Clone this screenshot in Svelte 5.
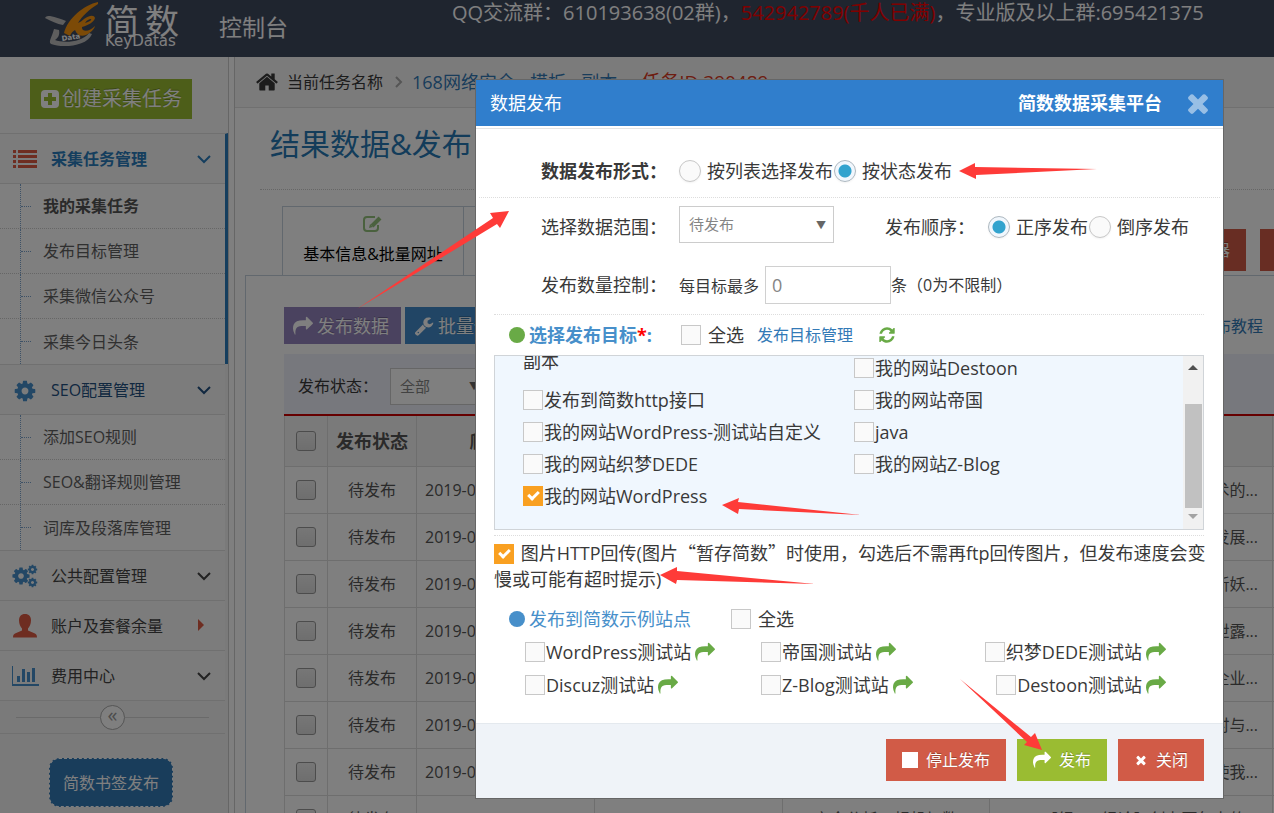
<script lang="ts">
  const paths = {
    share: 'M1792 640q0 26-19 45l-512 512q-19 19-45 19t-45-19-19-45v-256h-224q-98 0-175.500 6t-154 21.500-133 42.500-105.500 69.500-80 101-48.500 138.500-17.500 181q0 55 5 123 0 6 2.500 23.500t2.500 26.500q0 15-8.500 25t-23.500 10q-16 0-28-17-7-9-13-22t-13.500-30-10.500-24q-127-285-127-451 0-199 53-333 162-403 875-403h224v-256q0-26 19-45t45-19 45 19l512 512q19 19 19 45z',
    times: 'M1490 1322q0 40-28 68l-136 136q-28 28-68 28t-68-28l-294-294-294 294q-28 28-68 28t-68-28l-136-136q-28-28-28-68t28-68l294-294-294-294q-28-28-28-68t28-68l136-136q28-28 68-28t68 28l294 294 294-294q28-28 68-28t68 28l136 136q28 28 28 68t-28 68l-294 294 294 294q28 28 28 68z',
    home: 'M1472 992v480q0 26-19 45t-45 19h-384v-384h-256v384h-384q-26 0-45-19t-19-45v-480q0-1 .5-3t.5-3l575-474 575 474q1 2 1 6zm223-69l-62 74q-8 9-21 11h-3q-13 0-21-7l-692-577-692 577q-12 8-24 7-13-2-21-11l-62-74q-8-10-7-23.500t11-21.500l719-599q32-26 76-26t76 26l244 204v-195q0-14 9-23t23-9h192q14 0 23 9t9 23v408l219 182q10 8 11 21.500t-7 23.500z',
    cog: 'M1152 896q0-106-75-181t-181-75-181 75-75 181 75 181 181 75 181-75 75-181zm512-109v222q0 12-8 23t-20 13l-185 28q-19 54-39 91 35 50 107 138 10 12 10 25t-9 23q-27 37-99 108t-94 71q-12 0-26-9l-138-108q-44 23-91 38-16 136-29 186-7 28-36 28h-222q-14 0-24.500-8.500t-11.500-21.500l-28-184q-49-16-90-37l-141 107q-10 9-25 9-14 0-25-11-126-114-165-168-7-10-7-23 0-12 8-23 15-21 51-66.500t54-70.500q-27-50-41-99l-183-27q-13-2-21-12.500t-8-23.500v-222q0-12 8-23t19-13l186-28q14-46 39-92-40-57-107-138-10-12-10-24 0-10 9-23 26-36 98.500-107.500t94.500-71.500q13 0 26 10l138 107q44-23 91-38 16-136 29-186 7-28 36-28h222q14 0 24.500 8.500t11.500 21.500l28 184q49 16 90 37l142-107q9-9 24-9 13 0 25 10 129 119 165 170 7 8 7 22 0 12-8 23-15 21-51 66.500t-54 70.500q26 50 41 98l183 28q13 2 21 12.500t8 23.500z',
    wrench: 'M448 1472q0-26-19-45t-45-19-45 19-19 45 19 45 45 19 45-19 19-45zm644-420l-682 682q-37 37-90 37-52 0-91-37l-106-108q-38-36-38-90 0-53 38-91l681-681q39 98 114.500 173.500t173.500 114.500zm634-435q0 39-23 106-47 134-164.500 217.500t-258.500 83.500q-185 0-316.500-131.500t-131.500-316.500 131.500-316.500 316.500-131.500q58 0 121.500 16.500t107.500 46.500q16 11 16 28t-16 28l-293 169v224l193 107q5-3 79-48.500t135.500-81 70.500-35.500q15 0 23.500 10t8.500 25z',
    refresh: 'M1639 1056q0 5-1 7-64 268-268 434.500t-478 166.500q-146 0-282.500-55t-243.500-157l-129 129q-19 19-45 19t-45-19-19-45v-448q0-26 19-45t45-19h448q26 0 45 19t19 45-19 45l-137 137q71 66 161 102t187 36q134 0 250-65t186-179q11-17 53-117 8-23 30-23h192q13 0 22.500 9.500t9.500 22.500zm25-800v448q0 26-19 45t-45 19h-448q-26 0-45-19t-19-45 19-45l138-138q-148-137-349-137-134 0-250 65t-186 179q-11 17-53 117-8 23-30 23h-199q-13 0-22.500-9.500t-9.500-22.500v-7q65-268 270-434.500t480-166.500q146 0 284 55.500t245 156.500l130-129q19-19 45-19t45 19 19 45z',
  }

  const menu = [
    { icon: 'bars', label: '采集任务管理', tone: 'active', open: true, items: ['我的采集任务', '发布目标管理', '采集微信公众号', '采集今日头条'] },
    { icon: 'cog', label: 'SEO配置管理', tone: 'navy', open: false, items: ['添加SEO规则', 'SEO&翻译规则管理', '词库及段落库管理'] },
    { icon: 'cogs', label: '公共配置管理', tone: '', open: false, items: [] },
    { icon: 'user', label: '账户及套餐余量', tone: '', open: false, items: [] },
    { icon: 'chart', label: '费用中心', tone: '', open: false, items: [] },
  ]

  const rows = [
    { title: '技术的...' },
    { title: '发展...' },
    { title: '斩妖...' },
    { title: '泄露...' },
    { title: '企业...' },
    { title: '时与...' },
    { title: '使我...' },
    { url: 'http://www.fxdj168', source: '安全分析、规机加数', title: '【绿168绿论】创力百年力的...' },
  ]

  let leftTargets = $state([
    { name: '发布到简数http接口', on: false },
    { name: '我的网站WordPress-测试站自定义', on: false },
    { name: '我的网站织梦DEDE', on: false },
    { name: '我的网站WordPress', on: true },
  ])
  let rightTargets = $state([
    { name: '我的网站Destoon', on: false },
    { name: '我的网站帝国', on: false },
    { name: 'java', on: false },
    { name: '我的网站Z-Blog', on: false },
  ])
  let demoSites = $state([
    { name: 'WordPress测试站', on: false },
    { name: '帝国测试站', on: false },
    { name: '织梦DEDE测试站', on: false },
    { name: 'Discuz测试站', on: false },
    { name: 'Z-Blog测试站', on: false },
    { name: 'Destoon测试站', on: false },
  ])

  let mode = $state('status')
  let order = $state('asc')
  let limit = $state('0')
  let uploadImages = $state(true)
  let list: HTMLElement

  $effect(() => {
    list.scrollTop = list.scrollHeight
  })
</script>

{#snippet icon(name, size = 18)}
  <svg class="icon" width={size} height={size} viewBox="0 0 1792 1792" fill="currentColor" aria-hidden="true"><path d={paths[name]} /></svg>
{/snippet}

{#snippet menuIcon(name)}
  <svg class="menu-icon {name}" width="28" height="24" viewBox="0 0 28 24" fill="currentColor" aria-hidden="true">
    {#if name === 'bars'}
      {#each [3, 8, 13, 18] as y}
        <rect x="2" {y} width="3" height="3" />
        <rect x="7" {y} width="19" height="3" />
      {/each}
    {:else if name === 'cog'}
      <svg x="2" y="1" width="24" height="24" viewBox="0 0 1792 1792"><path d={paths.cog} /></svg>
    {:else if name === 'cogs'}
      <svg x="0" y="2" width="20" height="20" viewBox="0 0 1792 1792"><path d={paths.cog} /></svg>
      <svg x="16" y="0" width="11" height="11" viewBox="0 0 1792 1792"><path d={paths.cog} /></svg>
      <svg x="16" y="13" width="11" height="11" viewBox="0 0 1792 1792"><path d={paths.cog} /></svg>
    {:else if name === 'user'}
      <path d="M14 0c-4 0-6 2.500-6 6.500 0 3.500 1.500 6.500 3 8v2L4 19.500c-1.500.700-2 2-2 4h24c0-2-.5-3.300-2-4l-7-3v-2c1.500-1.500 3-4.500 3-8C20 2.500 18 0 14 0z" />
    {:else}
      <path d="M1 2h1v18h26v2H1z" />
      <rect x="6" y="12" width="3" height="6" />
      <rect x="11" y="5" width="3" height="13" />
      <rect x="16" y="8" width="3" height="10" />
      <rect x="21" y="4" width="3" height="14" />
    {/if}
  </svg>
{/snippet}

{#snippet targetItem(target)}
  <label class="check-row">
    <input type="checkbox" class="check" bind:checked={target.on} />
    <span>{target.name}</span>
  </label>
{/snippet}

<div class="page">
  <header class="topbar">
    <div class="brand">
      <svg width="56" height="48" viewBox="44 0 56 48" aria-hidden="true">
        <path d="M45 18c1-2 3-2 5-2 6 1 11 3 16 5l-3 4c-6-1-12-4-18-7z" fill="#bdbdbd" />
        <path d="M54 29l5 1c1 5-1 8-4 10 7 3 27 3 34-7l3 1c-5 13-31 14-41 10-3-2 1-7 3-15z" fill="#bdbdbd" />
        <path d="M98 2c-14 3-30 16-34 31l6 3c1-3 3-5 5-6 2 5 6 7 11 5 4-2 8-5 9-9-4 4-9 6-12 4-1-1-1-2-1-3 7-2 12-5 13-9-1-4-7-2-11 1-2 2-4 3-6 4 4-7 12-14 20-19z" fill="#f8940f" />
        <path d="M85 23c2-3 4-4 6-4 1 1-2 3-6 4z" fill="#3e4a5f" />
        <text x="62" y="41" class="logo-data" transform="rotate(-8 62 41)">Data</text>
      </svg>
      <div class="brand-name">
        <div class="brand-cn"><span>简</span><span>数</span></div>
        <div class="brand-en">KeyDatas</div>
      </div>
    </div>
    <span class="console">控制台</span>
    <p class="notice">QQ交流群：610193638(02群)，<em>542942789(千人已满)</em>，专业版及以上群:695421375</p>
  </header>

  <div class="columns">
    <aside class="sidebar">
      <div class="create-wrap">
        <button class="create">
          <svg width="18" height="18" viewBox="0 0 18 18" aria-hidden="true">
            <rect width="18" height="18" rx="4" fill="#fff" />
            <path d="M7 3h4v4h4v4h-4v4H7v-4H3V7h4z" fill="#9abc32" />
          </svg>
          创建采集任务
        </button>
      </div>
      <nav>
        {#each menu as group}
          <div class="group" class:open={group.open}>
            <a href="#menu" class="group-head {group.tone}">
              {@render menuIcon(group.icon)}
              <span class="group-label">{group.label}</span>
              {#if group.icon === 'user'}
                <svg width="14" height="14" viewBox="0 0 14 14" aria-hidden="true"><path d="M1 0l6 6-6 6z" fill="#dd5a43" /></svg>
              {:else}
                <svg width="14" height="14" viewBox="0 0 14 14" aria-hidden="true"><path d="M1 4l6 6 6-6" fill="none" stroke="currentColor" stroke-width="2" /></svg>
              {/if}
            </a>
            {#if group.items.length}
              <ul>
                {#each group.items as item, i}
                  <li><a href="#item" class:current={group.open && i === 0}>{item}</a></li>
                {/each}
              </ul>
            {/if}
          </div>
        {/each}
      </nav>
      <div class="collapse"><button aria-label="收起">«</button></div>
      <div class="bookmark-wrap"><button class="bookmark">简数书签发布</button></div>
    </aside>

    <main>
      <div class="crumbs">
        {@render icon('home', 24)}
        <span>当前任务名称</span>
        <svg width="8" height="12" viewBox="0 0 8 12" aria-hidden="true"><path d="M1 1l5 5-5 5" fill="none" stroke="#aaa" stroke-width="2" /></svg>
        <a href="#task">168网络安全 - 模板 - 副本</a>
        <b>任务ID:390489</b>
      </div>
      <h1>结果数据&amp;发布</h1>

      <div class="tabs">
        <a href="#info" class="tab">
          <svg class="edit" width="20" height="18" viewBox="0 0 20 18" fill="none" stroke="#69aa46" aria-hidden="true">
            <path d="M12 2H4a3 3 0 0 0-3 3v8a3 3 0 0 0 3 3h8a3 3 0 0 0 3-3v-3" stroke-width="2" />
            <path d="M9 11l8-8" stroke-width="4" />
            <path d="M6 13l1-4 3 3z" fill="#69aa46" stroke="none" />
          </svg>
          基本信息&amp;批量网址
        </a>
        <a href="#rule" class="tab">采集规则</a>
        <div class="tab-actions">
          <button class="danger">采集器</button>
          <button class="danger">删除</button>
        </div>
      </div>

      <section class="panel">
        <div class="toolbar">
          <button class="tool purple">{@render icon('share', 20)}发布数据</button>
          <button class="tool blue">{@render icon('wrench', 20)}批量修改</button>
          <a href="#help">发布教程</a>
        </div>
        <div class="filter">
          <label for="state">发布状态：</label>
          <span class="select small"><select id="state"><option>全部</option></select></span>
        </div>
        <table>
          <colgroup>
            <col class="c-check" /><col class="c-state" /><col class="c-date" /><col class="c-url" /><col class="c-source" /><col class="c-title" /><col />
          </colgroup>
          <thead>
            <tr>
              <th><input type="checkbox" aria-label="全选" class="old-check" /></th>
              <th>发布状态</th>
              <th>爬取时间</th>
              <th>网址</th>
              <th>来源</th>
              <th>标题</th>
              <th></th>
            </tr>
          </thead>
          <tbody>
            {#each rows as row}
              <tr>
                <td><input type="checkbox" aria-label="选择" class="old-check" /></td>
                <td>待发布</td>
                <td class="date">2019-08-15 15:33:49</td>
                <td>{row.url ?? ''}</td>
                <td>{row.source ?? ''}</td>
                <td class="title">{row.title}</td>
                <td></td>
              </tr>
            {/each}
          </tbody>
        </table>
      </section>
    </main>
  </div>

  <div class="backdrop">
    <div class="dialog" role="dialog" aria-label="数据发布">
      <div class="dialog-head">
        <span>数据发布</span>
        <strong>简数数据采集平台</strong>
        <button aria-label="关闭窗口">{@render icon('times', 30)}</button>
      </div>

      <div class="dialog-body">
        <div class="row first">
          <strong class="row-label">数据发布形式：</strong>
          <label class="radio-label"><input type="radio" name="mode" value="list" bind:group={mode} />按列表选择发布</label>
          <label class="radio-label"><input type="radio" name="mode" value="status" bind:group={mode} />按状态发布</label>
        </div>

        <div class="row">
          <label class="row-label" for="range">选择数据范围：</label>
          <span class="select"><select id="range"><option>待发布</option></select></span>
          <span class="order-label">发布顺序：</span>
          <label class="radio-label"><input type="radio" name="order" value="asc" bind:group={order} />正序发布</label>
          <label class="radio-label"><input type="radio" name="order" value="desc" bind:group={order} />倒序发布</label>
        </div>

        <div class="row">
          <span class="row-label">发布数量控制：</span>
          <label class="limit">每目标最多<input type="text" bind:value={limit} /></label>
          <span class="small-text">条（0为不限制）</span>
        </div>

        <div class="targets">
          <div class="section-head">
            <i class="dot green"></i>
            <strong class="targets-title">选择发布目标<em>*</em>:</strong>
            <label class="all"><input type="checkbox" class="check" />全选</label>
            <a href="#targets">发布目标管理</a>
            <button class="refresh" aria-label="刷新">{@render icon('refresh', 18)}</button>
          </div>
          <div class="list-box">
            <div class="list" bind:this={list}>
              <div class="list-col">
                <div class="wrapped">副本</div>
                {#each leftTargets as target}
                  {@render targetItem(target)}
                {/each}
              </div>
              <div class="list-col">
                {#each rightTargets as target}
                  {@render targetItem(target)}
                {/each}
                <div class="blank"></div>
              </div>
            </div>
            <div class="scrollbar" aria-hidden="true">
              <svg width="10" height="6" viewBox="0 0 10 6"><path d="M0 5l5-5 5 5z" fill="#505050" /></svg>
              <div class="track"><div class="thumb"></div></div>
              <svg width="10" height="6" viewBox="0 0 10 6"><path d="M0 0l5 5 5-5z" fill="#a3a3a3" /></svg>
            </div>
          </div>
        </div>

        <div class="extras">
          <label class="upload">
            <input type="checkbox" class="check" bind:checked={uploadImages} />
            图片HTTP回传(图片<span class="cjk">“</span>暂存简数<span class="cjk">”</span>时使用，勾选后不需再ftp回传图片，但发布速度会变慢或可能有超时提示)
          </label>
          <div class="section-head demo-head">
            <i class="dot blue"></i>
            <span class="demo-title">发布到简数示例站点</span>
            <label class="all"><input type="checkbox" class="check" />全选</label>
          </div>
          <div class="demo-grid">
            {#each demoSites as site}
              <div class="demo">
                {@render targetItem(site)}
                <a href="#visit" aria-label={site.name}>{@render icon('share', 20)}</a>
              </div>
            {/each}
          </div>
        </div>
      </div>

      <div class="dialog-foot">
        <button class="danger"><i class="square"></i>停止发布</button>
        <button class="success">{@render icon('share', 18)}发布</button>
        <button class="danger">{@render icon('times', 14)}关闭</button>
      </div>
    </div>
  </div>

  <svg class="arrows" width="1274" height="813" viewBox="0 0 1274 813" fill="#fe3b38" aria-hidden="true">
    <path d="M959 171l16-8v4l122 2-121 6v4z" />
    <path d="M509 211l-19 2 3 5-136 91 140-85 3 4z" />
    <path d="M722 505l17-7-1 4 123 13-122-6-1 5z" />
    <path d="M660 575l17-8v4l138 13-138-4-1 4z" />
    <path d="M1042 750l-7-17-4 4-71-58 67 63-3 3z" />
  </svg>
</div>

<style>
  :global(body) {
    margin: 0;
  }

  .page {
    position: relative;
    height: 100vh;
    min-height: 813px;
    overflow: hidden;
    background: #fff;
    color: #393939;
    font: 16px/24px 'Open Sans', 'Noto Sans CJK SC', sans-serif;
  }

  button, input, select {
    box-sizing: border-box;
    margin: 0;
    font: inherit;
  }
  button {
    display: inline-flex;
    align-items: center;
    padding: 0;
    border: 0;
    background: none;
    color: #fff;
    white-space: nowrap;
  }
  a {
    color: #337ab7;
    text-decoration: none;
  }
  em {
    color: #f00;
    font-style: normal;
  }
  .icon {
    flex: none;
  }

  /* top bar */
  .topbar {
    display: flex;
    align-items: flex-start;
    height: 57px;
    padding-left: 44px;
    background: #3e4a5f;
    color: #fff;
    white-space: nowrap;
  }
  .brand {
    display: flex;
    gap: 5px;
    width: 175px;
  }
  .brand-cn {
    display: flex;
    gap: 6px;
    height: 35px;
    padding-top: 4px;
    box-sizing: border-box;
    font-size: 34px;
    line-height: 34px;
  }
  .brand-en {
    font: 15px/12px 'DejaVu Sans', sans-serif;
  }
  .logo-data {
    font: bold 7px 'DejaVu Sans', sans-serif;
    fill: #fff;
  }
  .console {
    width: 233px;
    font-size: 23px;
    line-height: 54px;
  }
  .notice {
    margin: 0;
    font-size: 20px;
    line-height: 26px;
  }

  .columns {
    display: flex;
  }

  /* sidebar */
  .sidebar {
    flex: none;
    width: 228px;
    height: 100vh;
    border-right: 1px solid #ccc;
    background: #f4f4f4;
  }
  .create-wrap {
    padding: 22px 0 14px 30px;
    background: #fbfbfb;
  }
  .create {
    gap: 3px;
    height: 40px;
    padding: 0 10px 0 11px;
    background: #9abc32;
    font-size: 20px;
    text-shadow: 0 -1px 0 rgba(0, 0, 0, 0.25);
  }
  .group {
    margin-right: 3px;
    border-top: 1px solid #e0e0e0;
    background: #f9f9f9;
  }
  .group.open {
    margin-right: 0;
    border-right: 3px solid #2b7dbc;
  }
  .group-head {
    display: flex;
    align-items: center;
    height: 49px;
    padding: 0 14px 0 11px;
    color: #444;
  }
  .group-head.active {
    color: #2b7dbc;
    font-weight: bold;
  }
  .group-head.navy {
    color: #225081;
  }
  .group-label {
    flex: 1;
    margin-left: 12px;
  }
  .menu-icon {
    flex: none;
    color: #478fca;
  }
  .menu-icon.bars, .menu-icon.user {
    color: #dd5a43;
  }
  ul {
    margin: 0;
    padding: 0;
    border-top: 1px solid #e0e0e0;
    background: #fff;
    list-style: none;
  }
  li {
    display: flex;
    align-items: center;
    height: 44px;
    border-bottom: 1px dotted #ccc;
  }
  li:last-child {
    height: 45px;
    border-bottom: 0;
  }
  li::before {
    content: '';
    align-self: stretch;
    width: 0;
    margin-left: 20px;
    border-left: 1px dotted #7aa3cc;
  }
  li::after {
    content: '';
    order: 1;
    width: 10px;
    border-top: 1px dotted #7aa3cc;
  }
  li a {
    order: 2;
    margin-left: 12px;
    color: #616161;
  }
  li a.current {
    color: #555;
    font-weight: bold;
  }
  .collapse {
    display: flex;
    align-items: center;
    justify-content: center;
    height: 32px;
    margin-right: 3px;
    border: solid #e0e0e0;
    border-width: 1px 0;
  }
  .collapse::before, .collapse::after {
    content: '';
    flex: 1;
    margin-left: 16px;
    border-top: 1px solid #d5d5d5;
  }
  .collapse::after {
    margin: 0 16px 0 0;
  }
  .collapse button {
    justify-content: center;
    width: 25px;
    height: 25px;
    padding-bottom: 4px;
    border: 1px solid #aaa;
    border-radius: 50%;
    background: #fff;
    color: #999;
    font-size: 20px;
  }
  .bookmark-wrap {
    padding: 24px 0 0 49px;
  }
  .bookmark {
    height: 49px;
    padding: 0 13px;
    border: 1px dashed #fff;
    border-radius: 10px;
    background: #337ab7;
  }

  /* page content */
  main {
    flex: 1;
    min-width: 0;
    margin-left: 5px;
    border-left: 1px solid #ccc;
  }
  .crumbs {
    display: flex;
    align-items: center;
    height: 50px;
    padding-left: 20px;
    border-bottom: 1px solid #e0e0e0;
    background: #f7f7f7;
    white-space: nowrap;
  }
  .crumbs span {
    margin: 0 12px 0 8px;
  }
  .crumbs a {
    margin: 0 24px 0 9px;
    font-size: 18px;
  }
  .crumbs b {
    color: #dd3a23;
    font-size: 19px;
    font-weight: 400;
  }
  h1 {
    margin: 0 0 16px 25px;
    padding: 16px 0 25px 10px;
    border-bottom: 1px dotted #ccc;
    color: #2679b5;
    font-size: 30px;
    font-weight: 400;
    line-height: 40px;
  }
  .tabs {
    display: flex;
    height: 69px;
    padding-left: 47px;
  }
  .tab {
    display: flex;
    flex-direction: column;
    align-items: center;
    justify-content: space-between;
    box-sizing: border-box;
    min-width: 182px;
    margin-right: -1px;
    padding: 8px 17px 9px;
    border: 1px solid #c5d0dc;
    border-bottom: 0;
    color: #000;
  }
  .edit {
    opacity: 0.7;
  }
  .tab-actions {
    display: flex;
    gap: 14px;
    margin: 23px -50px 0 auto;
  }
  .danger, .success {
    height: 42px;
    gap: 8px;
    padding: 0 16px;
    background: #d15b47;
    text-shadow: 0 -1px 0 rgba(0, 0, 0, 0.25);
  }
  .success {
    background: #9abc32;
  }
  .panel {
    margin-left: 10px;
    padding: 31px 0 0 38px;
    border: solid #c5d0dc;
    border-width: 1px 0 0 1px;
  }
  .toolbar {
    display: flex;
    align-items: center;
    gap: 4px;
    margin-bottom: 10px;
  }
  .toolbar a {
    margin: 0 11px 0 auto;
  }
  .tool {
    gap: 4px;
    height: 37px;
    padding: 0 12px 0 9px;
    font-size: 18px;
    text-shadow: 0 -1px 0 rgba(0, 0, 0, 0.25);
  }
  .purple {
    background: #9585bf;
  }
  .tool.blue {
    background: #428bca;
  }
  .filter {
    display: flex;
    align-items: center;
    gap: 12px;
    height: 56px;
    padding: 4px 0 0 14px;
    background: #eff1fa;
  }
  .select {
    position: relative;
  }
  .select::after {
    content: '▼';
    position: absolute;
    top: 6px;
    right: 8px;
    color: #666;
    font-size: 10px;
    pointer-events: none;
  }
  select {
    appearance: none;
    width: 155px;
    height: 37px;
    padding: 0 9px;
    border: 1px solid #ccc;
    border-radius: 0;
    background: #fff;
    color: #858585;
    font-size: 15px;
  }
  .small select {
    width: 97px;
  }

  table {
    width: 1000px;
    border-top: 2px solid #c00;
    border-collapse: collapse;
    table-layout: fixed;
  }
  .c-check { width: 43px; }
  .c-state { width: 89px; }
  .c-date { width: 178px; }
  .c-url { width: 188px; }
  .c-source { width: 207px; }
  .c-title { width: 283px; }
  th, td {
    box-sizing: border-box;
    height: 47px;
    padding: 0 8px;
    border: 1px solid #ddd;
    color: #555;
    text-align: center;
    white-space: nowrap;
    overflow: hidden;
  }
  th {
    height: 51px;
    background: #f5f5f5;
    font-size: 18px;
  }
  td.date {
    text-align: left;
  }
  td.title {
    padding-right: 14px;
    text-align: right;
  }
  .old-check {
    appearance: none;
    display: block;
    width: 20px;
    height: 20px;
    margin: 0 auto;
    border: 1px solid #999;
    border-radius: 3px;
    background: linear-gradient(#eee, #ddd);
  }

  /* dialog */
  .backdrop {
    position: absolute;
    inset: 0;
    display: flex;
    align-items: flex-start;
    justify-content: flex-end;
    padding: 79px 50px 0 0;
    background: rgba(0, 0, 0, 0.5);
  }
  .dialog {
    box-sizing: border-box;
    width: 749px;
    border: 1px solid #666;
    background: #fff;
    font-size: 18px;
    line-height: 26px;
  }
  .dialog-head {
    display: flex;
    align-items: center;
    height: 46px;
    padding: 0 10px 0 14px;
    background: #307ecc;
    color: #fff;
  }
  .dialog-head strong {
    margin: 0 21px 0 auto;
  }
  .dialog-head button {
    opacity: 0.5;
  }
  .dialog-body {
    margin-top: 2px;
    padding-bottom: 22px;
    border-top: 1px solid #e5e5e5;
  }
  .row {
    display: flex;
    align-items: center;
    height: 58px;
    padding-left: 65px;
    white-space: nowrap;
  }
  .row.first {
    height: 53px;
    margin: 0 3px;
    padding: 15px 0 0 62px;
    border-bottom: 1px dotted #ddd;
  }
  .row .select {
    margin-bottom: 6px;
  }
  .row-label {
    width: 138px;
  }
  .radio-label {
    display: flex;
    align-items: center;
    gap: 6px;
    margin-right: 1px;
  }
  input[type='radio'] {
    appearance: none;
    width: 22px;
    height: 22px;
    border: 1px solid #c8c8c8;
    border-radius: 50%;
    background: #fafafa;
    box-shadow: 0 1px 2px rgba(0, 0, 0, 0.05);
  }
  input[type='radio']:checked {
    border-color: #adb8c0;
    background: radial-gradient(circle, #32a3ce 6px, #f1f7fd 7px);
  }
  .order-label {
    width: 103px;
    margin-left: 51px;
  }
  .limit, .small-text {
    font-size: 16px;
  }
  input[type='text'] {
    width: 126px;
    height: 38px;
    margin-left: 6px;
    padding: 0 6px;
    border: 1px solid #d0d0d0;
    color: #858585;
    font-size: 18px;
  }
  .targets, .extras {
    margin: 0 19px 5px 18px;
    border-top: 1px dotted #ddd;
  }
  .extras {
    margin-bottom: 0;
    padding-top: 3px;
  }
  .section-head {
    display: flex;
    align-items: center;
    height: 40px;
    padding-left: 15px;
  }
  .dot {
    width: 16px;
    height: 16px;
    margin-right: 4px;
    border-radius: 50%;
  }
  .dot.green {
    background: #69aa46;
  }
  .dot.blue {
    background: #478fca;
  }
  .targets-title {
    width: 152px;
    color: #478fca;
  }
  .demo-title {
    width: 202px;
    color: #478fca;
  }
  .all {
    display: flex;
    align-items: center;
    gap: 7px;
    margin-right: 13px;
  }
  .section-head a {
    font-size: 16px;
  }
  .refresh {
    margin-left: 25px;
    color: #69aa46;
  }
  .check {
    appearance: none;
    position: relative;
    flex: none;
    width: 20px;
    height: 20px;
    border: 1px solid #c8c8c8;
    background: #fafafa;
  }
  .check:checked {
    border-color: #f9a021;
    background: #f9a021;
  }
  .check:checked::after {
    content: '';
    position: absolute;
    top: 2px;
    left: 6px;
    width: 4px;
    height: 8px;
    border: solid #fff;
    border-width: 0 3px 3px 0;
    transform: rotate(45deg);
  }
  .list-box {
    display: flex;
    box-sizing: border-box;
    height: 175px;
    border: 1px solid #d0d4d8;
    background: #f0f7fe;
  }
  .list {
    display: flex;
    flex: 1;
    padding-left: 28px;
    overflow-x: hidden;
    overflow-y: auto;
    scrollbar-width: none;
  }
  .list-col {
    display: flex;
    flex: 1;
    flex-direction: column;
    justify-content: flex-end;
    height: 233px;
    padding-bottom: 17px;
    box-sizing: border-box;
    white-space: nowrap;
  }
  .list-col:first-child {
    flex: none;
    width: 331px;
  }
  .wrapped {
    margin-bottom: 11px;
    line-height: 24px;
  }
  .blank {
    height: 32px;
  }
  .check-row {
    display: flex;
    align-items: center;
    gap: 1px;
    height: 32px;
  }
  .scrollbar {
    display: flex;
    flex-direction: column;
    align-items: center;
    box-sizing: border-box;
    width: 20px;
    padding: 9px 0;
    background: #f1f1f1;
  }
  .track {
    display: flex;
    flex: 1;
    flex-direction: column;
    justify-content: flex-end;
    padding-bottom: 6px;
  }
  .thumb {
    width: 17px;
    height: 76%;
    background: #c1c1c1;
  }
  .upload {
    display: block;
    margin-right: -10px;
  }
  .upload .check {
    margin-right: 2px;
    vertical-align: -4px;
  }
  .cjk {
    font-family: 'Noto Sans CJK SC', sans-serif;
  }
  .demo-head {
    height: 32px;
    margin-top: 11px;
  }
  .demo-grid {
    display: grid;
    grid-template-columns: 236px 1fr auto;
    padding: 0 38px 0 31px;
  }
  .demo {
    display: flex;
    align-items: center;
    gap: 4px;
    height: 33px;
  }
  .demo:nth-child(3n) {
    justify-self: end;
  }
  .demo a {
    display: flex;
    color: #69aa46;
  }
  .dialog-foot {
    display: flex;
    justify-content: flex-end;
    gap: 11px;
    padding: 15px 19px 17px;
    border-top: 1px solid #e4e9ee;
    background: #eff3f8;
    font-size: 16px;
  }
  .square {
    width: 16px;
    height: 16px;
    background: #fff;
  }

  .arrows {
    position: absolute;
    top: 0;
    left: 0;
    pointer-events: none;
  }
</style>
